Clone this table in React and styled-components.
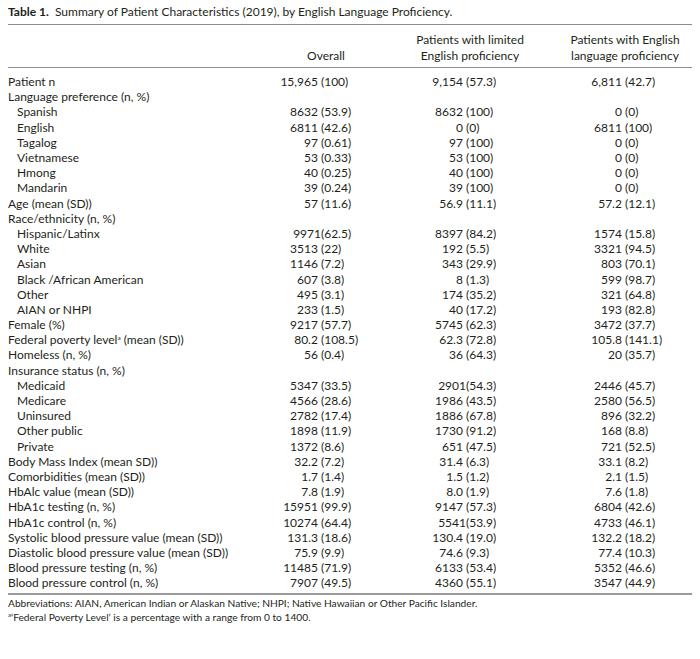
import React from 'react';
import styled, { createGlobalStyle } from 'styled-components';

const GlobalStyle = createGlobalStyle`
  html, body {
    margin: 0;
    padding: 0;
    background: #ffffff;
  }
  body {
    font-family: Lato, "Open Sans", "Liberation Sans", sans-serif;
    color: #231f20;
  }
`;

const COLS = '262px 112px 176px 134px';

const Page = styled.div`
  padding: 4px 8px 0 8px;
  width: 684px;
`;

const Caption = styled.div`
  font-size: 12px;
  line-height: 15px;
  padding-bottom: 5px;
  border-bottom: 1.5px solid #8c8c8c;

  b {
    font-weight: 700;
    margin-right: 3px;
  }
`;

const HeadRow = styled.div`
  display: grid;
  grid-template-columns: ${COLS};
  align-items: end;
  padding: 7px 0 3px 0;
  border-bottom: 1.5px solid #8c8c8c;
`;

const HeadCell = styled.div`
  font-size: 12px;
  line-height: 16px;
  text-align: center;
`;

const Body = styled.div`
  padding: 6px 0 3px 0;
  border-bottom: 2px solid #9a9a9a;
`;

const Row = styled.div`
  display: grid;
  grid-template-columns: ${COLS};
  align-items: center;
  height: 15.2px;
  font-size: 12px;
`;

const Label = styled.div`
  padding-left: ${p => (p.$indent ? '9px' : '0')};
  white-space: nowrap;

  sup {
    font-size: 6.5px;
    vertical-align: 4px;
    line-height: 0;
  }
`;

const Cell = styled.div`
  display: flex;
  white-space: pre;
`;

const Num = styled.span`
  width: ${p => p.$w}px;
  text-align: right;
  flex-shrink: 0;
`;

const Paren = styled.span`
  text-align: left;
`;

const Notes = styled.div`
  padding-top: 1px;
  font-size: 10.2px;
  line-height: 14px;

  sup {
    font-size: 6px;
    vertical-align: 4px;
    line-height: 0;
  }
`;

// paren offset inside each data column
const OFFSETS = [51, 84, 67];

const rows = [
  ['Patient n', 0, '15,965 (100)', '9,154 (57.3)', '6,811 (42.7)'],
  ['Language preference (n, %)', 0],
  ['Spanish', 1, '8632 (53.9)', '8632 (100)', '0 (0)'],
  ['English', 1, '6811 (42.6)', '0 (0)', '6811 (100)'],
  ['Tagalog', 1, '97 (0.61)', '97 (100)', '0 (0)'],
  ['Vietnamese', 1, '53 (0.33)', '53 (100)', '0 (0)'],
  ['Hmong', 1, '40 (0.25)', '40 (100)', '0 (0)'],
  ['Mandarin', 1, '39 (0.24)', '39 (100)', '0 (0)'],
  ['Age (mean (SD))', 0, '57 (11.6)', '56.9 (11.1)', '57.2 (12.1)'],
  ['Race/ethnicity (n, %)', 0],
  ['Hispanic/Latinx', 1, '9971(62.5)', '8397 (84.2)', '1574 (15.8)'],
  ['White', 1, '3513 (22)', '192 (5.5)', '3321 (94.5)'],
  ['Asian', 1, '1146 (7.2)', '343 (29.9)', '803 (70.1)'],
  ['Black /African American', 1, '607 (3.8)', '8 (1.3)', '599 (98.7)'],
  ['Other', 1, '495 (3.1)', '174 (35.2)', '321 (64.8)'],
  ['AIAN or NHPI', 1, '233 (1.5)', '40 (17.2)', '193 (82.8)'],
  ['Female (%)', 0, '9217 (57.7)', '5745 (62.3)', '3472 (37.7)'],
  ['fpl', 0, '80.2 (108.5)', '62.3 (72.8)', '105.8 (141.1)'],
  ['Homeless (n, %)', 0, '56 (0.4)', '36 (64.3)', '20 (35.7)'],
  ['Insurance status (n, %)', 0],
  ['Medicaid', 1, '5347 (33.5)', '2901(54.3)', '2446 (45.7)'],
  ['Medicare', 1, '4566 (28.6)', '1986 (43.5)', '2580 (56.5)'],
  ['Uninsured', 1, '2782 (17.4)', '1886 (67.8)', '896 (32.2)'],
  ['Other public', 1, '1898 (11.9)', '1730 (91.2)', '168 (8.8)'],
  ['Private', 1, '1372 (8.6)', '651 (47.5)', '721 (52.5)'],
  ['Body Mass Index (mean SD))', 0, '32.2 (7.2)', '31.4 (6.3)', '33.1 (8.2)'],
  ['Comorbidities (mean (SD))', 0, '1.7 (1.4)', '1.5 (1.2)', '2.1 (1.5)'],
  ['HbAlc value (mean (SD))', 0, '7.8 (1.9)', '8.0 (1.9)', '7.6 (1.8)'],
  ['HbA1c testing (n, %)', 0, '15951 (99.9)', '9147 (57.3)', '6804 (42.6)'],
  ['HbA1c control (n, %)', 0, '10274 (64.4)', '5541(53.9)', '4733 (46.1)'],
  ['Systolic blood pressure value (mean (SD))', 0, '131.3 (18.6)', '130.4 (19.0)', '132.2 (18.2)'],
  ['Diastolic blood pressure value (mean (SD))', 0, '75.9 (9.9)', '74.6 (9.3)', '77.4 (10.3)'],
  ['Blood pressure testing (n, %)', 0, '11485 (71.9)', '6133 (53.4)', '5352 (46.6)'],
  ['Blood pressure control (n, %)', 0, '7907 (49.5)', '4360 (55.1)', '3547 (44.9)'],
];

function Value({ text, offset }) {
  if (!text) return <Cell />;
  const i = text.indexOf('(');
  return (
    <Cell>
      <Num $w={offset}>{text.slice(0, i)}</Num>
      <Paren>{text.slice(i)}</Paren>
    </Cell>
  );
}

export default function App() {
  return (
    <Page>
      <GlobalStyle />
      <Caption>
        <b>Table 1.</b> Summary of Patient Characteristics (2019), by English Language Proficiency.
      </Caption>
      <HeadRow>
        <HeadCell />
        <HeadCell>Overall</HeadCell>
        <HeadCell>Patients with limited<br />English proficiency</HeadCell>
        <HeadCell>Patients with English<br />language proficiency</HeadCell>
      </HeadRow>
      <Body>
        {rows.map(([label, indent, ...vals]) => (
          <Row key={label}>
            <Label $indent={indent}>
              {label === 'fpl' ? (
                <>Federal poverty level<sup>a</sup> (mean (SD))</>
              ) : label}
            </Label>
            {[0, 1, 2].map(k => (
              <Value key={k} text={vals[k]} offset={OFFSETS[k]} />
            ))}
          </Row>
        ))}
      </Body>
      <Notes>
        <div>Abbreviations: AIAN, American Indian or Alaskan Native; NHPI; Native Hawaiian or Other Pacific Islander.</div>
        <div><sup>a</sup>‘Federal Poverty Level’ is a percentage with a range from 0 to 1400.</div>
      </Notes>
    </Page>
  );
}
